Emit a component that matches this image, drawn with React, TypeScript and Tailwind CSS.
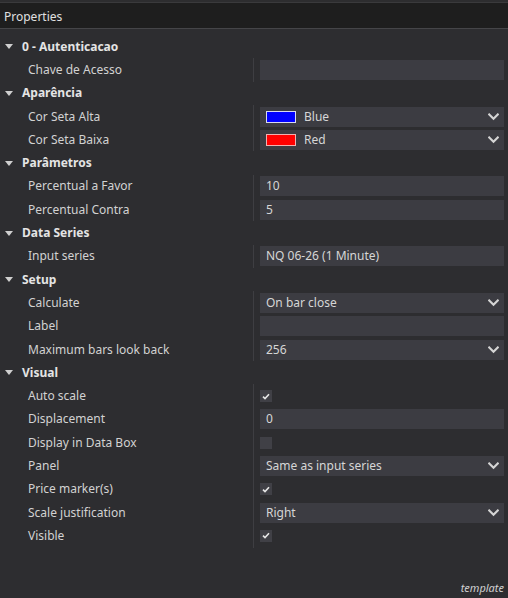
import React from "react";

type Prop =
  | { label: string; kind: "text"; value: string }
  | { label: string; kind: "select"; value: string; swatch?: { fill: string; border: string } }
  | { label: string; kind: "check"; checked: boolean };

type Section = { title: string; props: Prop[] };

const sections: Section[] = [
  { title: "0 - Autenticacao", props: [{ label: "Chave de Acesso", kind: "text", value: "" }] },
  {
    title: "Aparência",
    props: [
      { label: "Cor Seta Alta", kind: "select", value: "Blue", swatch: { fill: "#0000ff", border: "#d8d8f0" } },
      { label: "Cor Seta Baixa", kind: "select", value: "Red", swatch: { fill: "#ff0000", border: "#f0b0b0" } },
    ],
  },
  {
    title: "Parâmetros",
    props: [
      { label: "Percentual a Favor", kind: "text", value: "10" },
      { label: "Percentual Contra", kind: "text", value: "5" },
    ],
  },
  { title: "Data Series", props: [{ label: "Input series", kind: "text", value: "NQ 06-26 (1 Minute)" }] },
  {
    title: "Setup",
    props: [
      { label: "Calculate", kind: "select", value: "On bar close" },
      { label: "Label", kind: "text", value: "" },
      { label: "Maximum bars look back", kind: "select", value: "256" },
    ],
  },
  {
    title: "Visual",
    props: [
      { label: "Auto scale", kind: "check", checked: true },
      { label: "Displacement", kind: "text", value: "0" },
      { label: "Display in Data Box", kind: "check", checked: false },
      { label: "Panel", kind: "select", value: "Same as input series" },
      { label: "Price marker(s)", kind: "check", checked: true },
      { label: "Scale justification", kind: "select", value: "Right" },
      { label: "Visible", kind: "check", checked: true },
    ],
  },
];

function Chevron() {
  return (
    <svg width="11" height="8" viewBox="0 0 11 8" className="shrink-0">
      <path d="M1.2 1.5 L5.5 5.8 L9.8 1.5" fill="none" stroke="#d4d4d4" strokeWidth="2.2" strokeLinecap="square" />
    </svg>
  );
}

function Triangle() {
  return (
    <svg width="8" height="5" viewBox="0 0 8 5" className="shrink-0">
      <path d="M0 0 L8 0 L4 5 Z" fill="#cfcfcf" />
    </svg>
  );
}

function Value({ p }: { p: Prop }) {
  if (p.kind === "check") {
    return (
      <div className="w-[12px] h-[12px] bg-[#404046] flex items-center justify-center">
        {p.checked && (
          <svg width="8" height="7" viewBox="0 0 8 7">
            <path d="M1 3.6 L3 5.6 L7 1.2" fill="none" stroke="#e6e6e6" strokeWidth="1.6" />
          </svg>
        )}
      </div>
    );
  }
  if (p.kind === "text") {
    return (
      <div className="h-[20px] w-full bg-[#3c3c42] flex items-center pl-[6px] text-[#d6d6d6]">{p.value}</div>
    );
  }
  return (
    <div className="h-[20px] w-full bg-[#3c3c42] flex items-center pl-[6px] pr-[5px] text-[#d6d6d6]">
      {p.swatch && (
        <div
          className="w-[30px] h-[12px] border mr-[8px] shrink-0"
          style={{ backgroundColor: p.swatch.fill, borderColor: p.swatch.border }}
        />
      )}
      <span className="flex-1">{p.value}</span>
      <Chevron />
    </div>
  );
}

export default function App() {
  return (
    <div
      className="w-[508px] h-[598px] bg-[#2d2d30] flex flex-col text-[12px] leading-none text-[#d4d4d4] overflow-hidden"
      style={{ fontFamily: '"Noto Sans", "Open Sans", sans-serif' }}
    >
      <div className="h-[3px] bg-[#2d2d2f] border-b border-[#3a3a3c] shrink-0" />
      <div className="h-[26px] bg-[#1e1e1e] border-b border-[#454548] flex items-center pl-[4px] pt-[2px] text-[#e0e0e0] shrink-0">
        Properties
      </div>
      <div className="flex-1 flex flex-col pt-[6px]">
        {sections.map((s) => (
          <div key={s.title} className="flex flex-col">
            <div className="h-[23.3px] flex items-center pl-[5px] gap-[9px]">
              <Triangle />
              <span className="font-bold text-[#e4e4e4]">{s.title}</span>
            </div>
            {s.props.map((p) => (
              <div key={p.label} className="h-[23.3px] flex items-stretch">
                <div className="w-[254px] shrink-0 border-r border-[#3e3e42] flex items-center pl-[28px] text-[#d2d2d2]">
                  {p.label}
                </div>
                <div className="flex-1 flex items-center pl-[6px] pr-[4px]">
                  <Value p={p} />
                </div>
              </div>
            ))}
          </div>
        ))}
      </div>
      <div className="h-[22px] flex items-center justify-end pr-[4px] italic text-[11px] text-[#d0d0d0] shrink-0">
        template
      </div>
    </div>
  );
}
